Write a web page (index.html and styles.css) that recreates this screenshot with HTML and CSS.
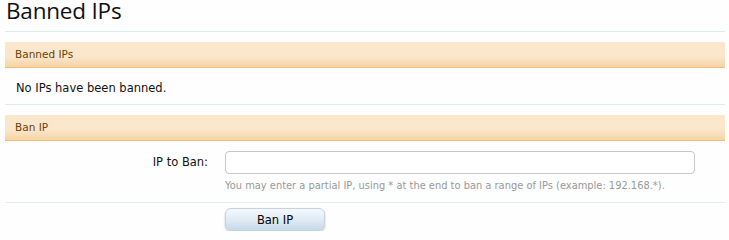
FILE: index.html
```html
<!DOCTYPE html>
<html>
<head>
<meta charset="utf-8">
<link rel="stylesheet" href="styles.css">
</head>
<body>
<div class="page">
  <h1 class="title">Banned IPs</h1>
  <div class="section">
    <h2 class="bar">Banned IPs</h2>
    <p class="empty">No IPs have been banned.</p>
  </div>
  <div class="section">
    <h2 class="bar">Ban IP</h2>
    <div class="row">
      <label class="label" for="ip">IP to Ban:</label>
      <div class="field">
        <input id="ip" class="input" type="text">
        <p class="hint">You may enter a partial IP, using * at the end to ban a range of IPs (example: 192.168.*).</p>
      </div>
    </div>
    <div class="actions">
      <button class="button" type="button">Ban IP</button>
    </div>
  </div>
</div>
</body>
</html>
```
FILE: styles.css
```css
html, body {
  margin: 0;
  padding: 0;
  background: #fefefe;
}
body {
  font-family: "DejaVu Sans", Tahoma, Verdana, sans-serif;
  font-size: 11px;
  color: #000;
}
.page {
  width: 720px;
  padding: 0 4px 0 5px;
}
.title {
  margin: 0;
  height: 32px;
  box-sizing: border-box;
  padding: 0 0 0 1px;
  font-family: "Open Sans", "DejaVu Sans", sans-serif;
  font-weight: 400;
  font-size: 22.5px;
  line-height: 22px;
  letter-spacing: -0.2px;
  color: #111;
  border-bottom: 1px solid #dbebf2;
}
.bar {
  margin: 10px 0 0;
  height: 26px;
  box-sizing: border-box;
  padding: 0 10px;
  font-size: 10.5px;
  font-weight: 400;
  line-height: 25px;
  color: #6d3f03;
  background: linear-gradient(to bottom, #fbe8cc 0%, #fae6cb 60%, #f8d3a2 100%);
  border-bottom: 1px solid #f0bf7c;
}
.empty {
  margin: 0;
  height: 37px;
  box-sizing: border-box;
  padding: 13px 11px 0;
  font-size: 11.5px;
  line-height: 14px;
  color: #111;
  border-bottom: 1px solid #dbebf2;
}
.row {
  display: grid;
  grid-template-columns: 203px 470px;
  column-gap: 17px;
  padding-top: 10px;
  border-bottom: 1px solid #e4ecef;
  height: 62px;
  box-sizing: border-box;
}
.label {
  text-align: right;
  font-size: 11.5px;
  line-height: 23px;
  color: #111;
}
.input {
  display: block;
  box-sizing: border-box;
  width: 470px;
  height: 23px;
  margin: 0;
  border: 1px solid #c8c8c8;
  border-radius: 4px;
  background: #fff;
}
.hint {
  margin: 5px 0 0;
  font-size: 9.9px;
  line-height: 14px;
  color: #999;
}
.actions {
  padding: 5px 0 0 220px;
}
.button {
  display: block;
  width: 100px;
  height: 23px;
  padding: 0;
  font-family: "DejaVu Sans", Tahoma, sans-serif;
  font-size: 11.5px;
  color: #000;
  border: 1px solid #c3d3e0;
  border-radius: 6px;
  background: linear-gradient(to bottom, #f4f8fb 0%, #e1ebf4 50%, #c6d9eb 100%);
  box-shadow: 0 1px 2px rgba(0,0,0,0.25);
}
```
